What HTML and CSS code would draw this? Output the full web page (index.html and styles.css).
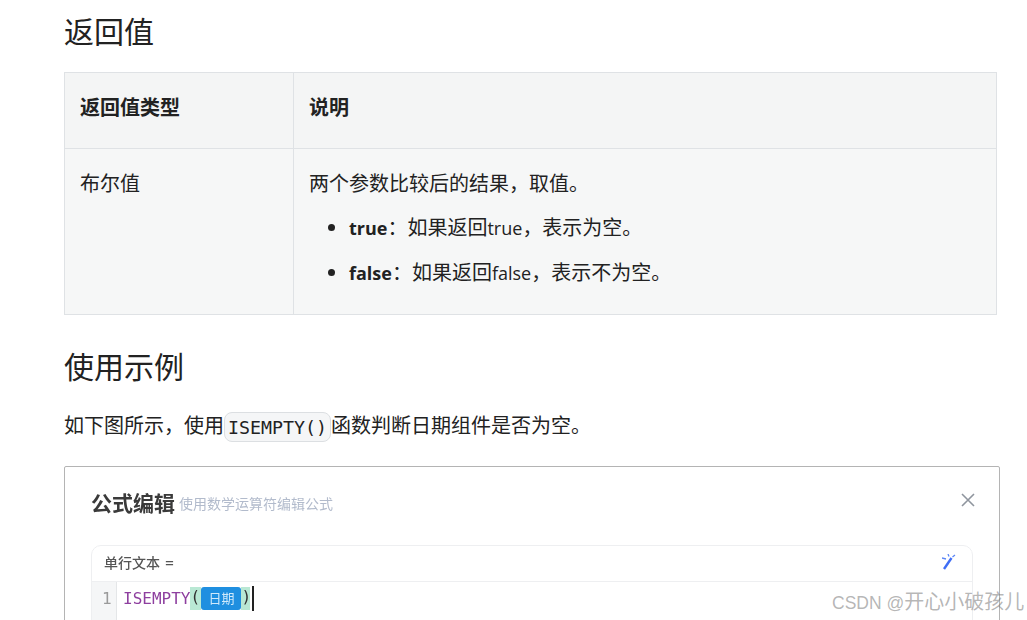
FILE: index.html
```html
<!DOCTYPE html>
<html lang="zh-CN">
<head>
<meta charset="utf-8">
<title>返回值</title>
<link rel="stylesheet" href="styles.css">
</head>
<body>
<main class="doc">
  <h2 class="title">返回值</h2>
  <table class="tbl">
    <thead>
      <tr><th class="c1">返回值类型</th><th>说明</th></tr>
    </thead>
    <tbody>
      <tr>
        <td class="c1">布尔值</td>
        <td>
          <p class="cell-p">两个参数比较后的结果，取值。</p>
          <ul class="list">
            <li><b class="en">true</b>：如果返回<span class="en">true</span>，表示为空。</li>
            <li><b class="en">false</b>：如果返回<span class="en">false</span>，表示不为空。</li>
          </ul>
        </td>
      </tr>
    </tbody>
  </table>
  <h2 class="title second">使用示例</h2>
  <p class="intro">如下图所示，使用<code class="code">ISEMPTY()</code>函数判断日期组件是否为空。</p>
  <figure class="shot">
    <div class="shot-head">
      <div class="shot-title"><strong>公式编辑</strong><span>使用数学运算符编辑公式</span></div>
      <svg class="close" width="16" height="16" viewBox="0 0 16 16"><path d="M2 2 14 14M14 2 2 14" stroke="#8f959e" stroke-width="1.6" fill="none"/></svg>
    </div>
    <div class="editor">
      <div class="editor-bar">
        <span>单行文本 <span class="eq">=</span></span>
        <svg width="14" height="16" viewBox="0 0 14 16"><path d="M2 15 9.500 4" stroke="#3f6df5" stroke-width="2.400" fill="none"/><path d="M0 4 4 5M6 0 7 2.500M13 1 10.500 3" stroke="#5b86f7" stroke-width="1.300" fill="none"/></svg>
      </div>
      <div class="editor-body">
        <div class="gutter">1</div>
        <div class="line"><span class="fn">ISEMPTY</span><span class="paren">(</span><span class="tag">日期</span><span class="paren paren-end">)</span><span class="caret"></span></div>
      </div>
    </div>
  </figure>
</main>
<div class="mark"><span class="mark-latin">CSDN @</span>开心小破孩儿</div>
</body>
</html>
```
FILE: styles.css
```css
html, body { margin: 0; height: 620px; overflow: hidden; background: #fff; }
body {
  font-family: "Open Sans", "Noto Sans CJK SC", sans-serif;
  font-size: 20px;
  color: #222;
  position: relative;
}
.doc { width: 933px; margin-left: 64px; }
.title {
  margin: 0;
  height: 72px;
  padding-top: 10px;
  box-sizing: border-box;
  font-size: 30px;
  line-height: 44px;
  font-weight: 400;
  color: #222;
}
.title.second { height: 44px; margin-top: 30px; padding-top: 0; }
.tbl {
  width: 933px;
  border-collapse: collapse;
  table-layout: fixed;
  background: #f6f7f7;
}
.tbl th, .tbl td {
  border: 1px solid #dfe2e5;
  padding: 0 15px;
  text-align: left;
  vertical-align: top;
  line-height: 30px;
}
.tbl th { height: 76px; background: #f4f5f5; font-weight: 700; vertical-align: middle; padding-bottom: 5px; box-sizing: border-box; }
.tbl td { padding-top: 20px; height: 166px; box-sizing: border-box; }
.tbl .c1 { width: 229px; box-sizing: border-box; }
.cell-p { margin: 0 0 14px; }
.list { margin: 0; padding-left: 40px; }
.list li { margin-bottom: 15px; }
.list li:last-child { margin-bottom: 0; }
.en { font-size: 18px; }
.intro { margin: 20px 0 0; line-height: 34px; height: 34px; white-space: nowrap; }
.code {
  display: inline-block;
  font-family: "DejaVu Sans Mono", "Liberation Mono", monospace;
  font-size: 18.300px;
  line-height: 28px;
  height: 26px;
  padding: 1px 3px 1px;
  background: #f5f6f7;
  border: 1px solid #dcdfe2;
  border-radius: 8px;
  vertical-align: -1px;
}
.shot {
  margin: 23px 0 0;
  width: 936px;
  height: 300px;
  box-sizing: border-box;
  border: 1px solid #b4b4b4;
  border-radius: 2px;
  padding: 0 26px;
}
.shot-head { display: flex; justify-content: space-between; align-items: flex-start; height: 78px; padding-top: 25px; box-sizing: border-box; filter: blur(0.4px); }
.shot-title { display: flex; align-items: center; gap: 4px; height: 24px; margin-top: -2px; }
.shot-title strong { font-size: 21px; color: #3a3a3a; font-weight: 700; }
.shot-title span { font-size: 14px; color: #b2bbcc; padding-top: 2px; }
.close { margin-right: -3px; }
.editor { border: 1px solid #eeeff1; border-radius: 10px; width: 882px; margin-right: -25px; box-sizing: border-box; filter: blur(0.3px); }
.editor-bar {
  height: 36px;
  display: flex; align-items: center; justify-content: space-between;
  padding: 0 16px 4px 12px;
  box-sizing: border-box;
  font-size: 14px;
  font-weight: 500;
  font-family: "Noto Sans CJK SC", sans-serif;
  color: #555;
  border-bottom: 1px solid #eeeff1;
}
.eq { font-family: "DejaVu Sans Mono", monospace; margin-left: 2px; }
.editor-body { display: flex; height: 160px; }
.gutter {
  width: 25px;
  background: #f5f6f7;
  border-right: 1px solid #e4e6e8;
  color: #9a9a9a;
  font-family: "DejaVu Sans Mono", monospace;
  font-size: 16px;
  line-height: 34px;
  padding-left: 10px;
  box-sizing: border-box;
}
.line { display: flex; align-items: flex-start; height: 34px; padding-left: 6px; font-family: "DejaVu Sans Mono", monospace; font-size: 16px; line-height: 34px; }
.fn { color: #8e3f9f; }
.paren { background: #b9e8d4; height: 23px; line-height: 20px; margin-top: 5px; color: #333; width: 11px; }
.paren-end { width: 9px; }
.tag {
  background: #1f8fe0; color: #cfe9fb;
  font-family: "Noto Sans CJK SC", sans-serif;
  font-size: 13px; line-height: 21px; height: 23px; width: 40px; text-align: center;
  border-radius: 3px; margin-top: 5px;
}
.caret { width: 2px; height: 25px; margin-top: 4px; background: #222; margin-left: 2px; }
.mark {
  position: absolute; left: 832px; top: 588px;
  font-family: "Noto Sans CJK SC", sans-serif;
  font-size: 20px; line-height: 26px; color: rgba(120,120,120,.55); white-space: nowrap;
}
.mark-latin { font-family: "Liberation Sans", sans-serif; font-size: 17.500px; }
```
